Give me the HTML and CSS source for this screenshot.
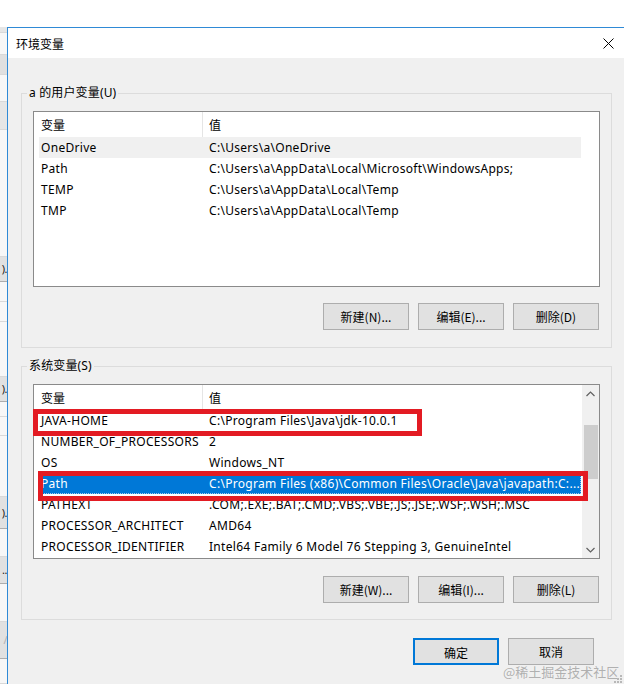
FILE: index.html
```html
<!DOCTYPE html>
<html lang="zh-CN">
<head>
<meta charset="utf-8">
<title>环境变量</title>
<link rel="stylesheet" href="styles.css">
</head>
<body>
<div class="screen">
  <div class="bgwin">
    <div class="seg s-gray h6"></div>
    <div class="seg s-light h22"></div>
    <div class="seg s-dark h20"></div>
    <div class="seg s-light h27"></div>
    <div class="seg s-gray h28"></div>
    <div class="seg s-light h127"></div>
    <div class="seg s-btn h25"><span>).</span></div>
    <div class="seg s-light h20"></div>
    <div class="seg s-light h20"></div>
    <div class="seg s-light h55"></div>
    <div class="seg s-btn h25"><span>).</span></div>
    <div class="seg s-light h15"></div>
    <div class="seg s-light h19"></div>
    <div class="seg s-light h61"></div>
    <div class="seg s-btn h32"><span>).</span></div>
    <div class="seg s-light h28"></div>
    <div class="seg s-btn h27"><span>..</span></div>
    <div class="seg s-light h38"></div>
    <div class="seg s-btn h37"><span class="faint">/</span></div>
    <div class="seg s-light h25"></div>
  </div>

  <div class="dialog">
    <div class="titlebar">
      <span class="title">环境变量</span>
      <svg class="close" width="11" height="11" viewBox="0 0 11 11" aria-hidden="true">
        <path d="M0.5 0.5 L10.5 10.5 M10.5 0.5 L0.5 10.5" stroke="#000" stroke-width="1" fill="none"/>
      </svg>
    </div>

    <div class="body">
      <fieldset class="group g1">
        <legend>a 的用户变量(U)</legend>
        <div class="list l1">
          <div class="cols">
            <div class="lhead"><div class="h1">变量</div><div class="h2">值</div></div>
            <div class="row inactive"><div class="c1">OneDrive</div><div class="c2">C:\Users\a\OneDrive</div></div>
            <div class="row"><div class="c1">Path</div><div class="c2">C:\Users\a\AppData\Local\Microsoft\WindowsApps;</div></div>
            <div class="row"><div class="c1">TEMP</div><div class="c2">C:\Users\a\AppData\Local\Temp</div></div>
            <div class="row"><div class="c1">TMP</div><div class="c2">C:\Users\a\AppData\Local\Temp</div></div>
          </div>
        </div>
        <div class="btns">
          <button class="btn">新建(N)...</button>
          <button class="btn">编辑(E)...</button>
          <button class="btn">删除(D)</button>
        </div>
      </fieldset>

      <fieldset class="group g2">
        <legend>系统变量(S)</legend>
        <div class="list l2">
          <div class="cols">
            <div class="lhead"><div class="h1">变量</div><div class="h2">值</div></div>
            <div class="row"><div class="c1">JAVA-HOME</div><div class="c2">C:\Program Files\Java\jdk-10.0.1</div></div>
            <div class="row"><div class="c1">NUMBER_OF_PROCESSORS</div><div class="c2">2</div></div>
            <div class="row"><div class="c1">OS</div><div class="c2">Windows_NT</div></div>
            <div class="row selected"><div class="c1">Path</div><div class="c2">C:\Program Files (x86)\Common Files\Oracle\Java\javapath:C:...</div></div>
            <div class="row"><div class="c1">PATHEXT</div><div class="c2">.COM;.EXE;.BAT;.CMD;.VBS;.VBE;.JS;.JSE;.WSF;.WSH;.MSC</div></div>
            <div class="row"><div class="c1">PROCESSOR_ARCHITECT</div><div class="c2">AMD64</div></div>
            <div class="row"><div class="c1">PROCESSOR_IDENTIFIER</div><div class="c2">Intel64 Family 6 Model 76 Stepping 3, GenuineIntel</div></div>
          </div>
          <div class="scrollbar">
            <div class="sbtn">
              <svg width="9" height="6" viewBox="0 0 9 6" aria-hidden="true"><path d="M0.5 5 L4.5 1 L8.5 5" stroke="#606060" stroke-width="1.2" fill="none"/></svg>
            </div>
            <div class="track-top"></div>
            <div class="thumb"></div>
            <div class="track-rest"></div>
            <div class="sbtn">
              <svg width="9" height="6" viewBox="0 0 9 6" aria-hidden="true"><path d="M0.5 1 L4.5 5 L8.5 1" stroke="#606060" stroke-width="1.2" fill="none"/></svg>
            </div>
          </div>
          <div class="mark mark1"></div>
          <div class="mark mark2"></div>
        </div>
        <div class="btns">
          <button class="btn">新建(W)...</button>
          <button class="btn">编辑(I)...</button>
          <button class="btn">删除(L)</button>
        </div>
      </fieldset>

      <div class="footer">
        <button class="btn primary">确定</button>
        <button class="btn">取消</button>
      </div>
    </div>
  </div>

  <div class="watermark">@稀土掘金技术社区</div>
  <svg class="grip" width="8" height="8" viewBox="0 0 8 8" aria-hidden="true">
    <rect x="6" y="0" width="2" height="2" fill="#b8b8b8"/>
    <rect x="3" y="3" width="2" height="2" fill="#b8b8b8"/>
    <rect x="6" y="3" width="2" height="2" fill="#b8b8b8"/>
    <rect x="0" y="6" width="2" height="2" fill="#b8b8b8"/>
    <rect x="3" y="6" width="2" height="2" fill="#b8b8b8"/>
    <rect x="6" y="6" width="2" height="2" fill="#b8b8b8"/>
  </svg>
</div>
</body>
</html>
```

FILE: styles.css
```css
* { box-sizing: border-box; }

html, body {
  margin: 0;
  padding: 0;
}

body {
  width: 624px;
  height: 684px;
  overflow: hidden;
  background: #ffffff;
  font-family: "Noto Sans", "Noto Sans CJK SC", sans-serif;
  font-size: 12px;
  color: #000;
}

.screen {
  position: relative;
  display: flex;
  height: 684px;
  padding-top: 27px;
}

/* background window sliver on the left */
.bgwin {
  width: 7px;
  flex: none;
  display: flex;
  flex-direction: column;
  overflow: hidden;
  background: #f0f0f0;
}

.seg {
  flex: none;
  border-bottom: 1px solid #d9d9d9;
  display: flex;
  align-items: center;
  justify-content: flex-end;
  white-space: nowrap;
}

.seg span {
  font-size: 11px;
  line-height: 14px;
  letter-spacing: -0.5px;
  color: #222;
}

.seg span.faint { color: #b0b0b0; }

.s-gray { background: #e6e6e6; }
.s-dark { background: #e0e0e0; }
.s-light { background: #f7f7f7; }
.s-btn { background: #e1e1e1; border-bottom-color: #adadad; }

.h6 { height: 6px; }
.h15 { height: 15px; }
.h19 { height: 19px; }
.h20 { height: 20px; }
.h22 { height: 22px; }
.h25 { height: 25px; }
.h27 { height: 27px; }
.h28 { height: 28px; }
.h32 { height: 32px; }
.h37 { height: 37px; }
.h38 { height: 38px; }
.h55 { height: 55px; }
.h61 { height: 61px; }
.h127 { height: 127px; }

/* dialog */
.dialog {
  flex: 1;
  display: flex;
  flex-direction: column;
  background: #f0f0f0;
  border-left: 1px solid #2f8ad6;
  border-top: 1px solid #2f8ad6;
}

.titlebar {
  height: 30px;
  flex: none;
  background: #ffffff;
  display: flex;
  align-items: center;
  justify-content: space-between;
  padding: 0 10px 0 8px;
}

.title {
  font-family: "Noto Sans CJK SC", sans-serif;
  font-size: 12px;
}

.close { display: block; }

.body {
  padding-top: 27px;
}

.group {
  margin: 0 12px 0 13px;
  padding: 0 0 17px 0;
  border: 1px solid #dcdcdc;
  min-width: 0;
}

.g2 {
  margin-top: 10px;
  padding-bottom: 16px;
}

.group legend {
  margin-left: 5px;
  padding: 0 2px;
  height: 16px;
  line-height: 16px;
  letter-spacing: 0.15px;
  font-family: "Noto Sans", "Noto Sans CJK SC", sans-serif;
}

/* list views */
.list {
  position: relative;
  display: flex;
  margin: 10px 11px 0 11px;
  border: 1px solid #8a8a8a;
  background: #ffffff;
}

.l1 { height: 176px; }
.l2 { height: 175px; }

.cols {
  width: 547px;
  flex: none;
  overflow: hidden;
}

.lhead {
  display: flex;
  height: 25px;
  line-height: 25px;
}

.h1 {
  width: 169px;
  padding-left: 7px;
  border-right: 1px solid #e5e5e5;
  font-family: "Noto Sans CJK SC", sans-serif;
}

.h2 {
  flex: 1;
  padding-left: 6px;
  font-family: "Noto Sans CJK SC", sans-serif;
}

.row {
  display: flex;
  height: 21px;
  line-height: 21px;
  margin-left: 5px;
  white-space: nowrap;
  letter-spacing: 0.3px;
}

.c1 {
  width: 164px;
  flex: none;
  padding-left: 2px;
  overflow: hidden;
}

.c2 {
  flex: 1;
  padding-left: 6px;
  overflow: hidden;
}

.row.inactive { background: #f0f0f0; }

.row.selected {
  background: #0078d7;
  color: #ffffff;
  outline: 1px dotted #9ec8ef;
  outline-offset: -1px;
}

/* scrollbar */
.scrollbar {
  margin-left: 1px;
  width: 17px;
  flex: none;
  display: flex;
  flex-direction: column;
  background: #f0f0f0;
}

.sbtn {
  height: 17px;
  flex: none;
  display: flex;
  align-items: center;
  justify-content: center;
}

.sbtn svg { display: block; }

.track-top { height: 23px; flex: none; }

.thumb {
  height: 54px;
  flex: none;
  margin: 0 1px 0 2px;
  background: #cdcdcd;
}

.track-rest { flex: 1; }

/* red annotation boxes */
.mark {
  position: absolute;
  border: 5px solid #e31b23;
}

.mark1 {
  left: -1px;
  top: 24px;
  width: 389px;
  height: 27px;
}

.mark2 {
  left: 4px;
  top: 86px;
  width: 550px;
  height: 30px;
}

/* buttons */
.btns {
  display: flex;
  justify-content: flex-end;
  gap: 9px;
  margin: 17px 12px 0 0;
}

.g2 .btns { margin-top: 17px; }
.g1 .btns { margin-top: 16px; }

.btn {
  width: 86px;
  height: 27px;
  padding: 0;
  border: 1px solid #adadad;
  background: #e1e1e1;
  color: #000;
  font-family: "Noto Sans CJK SC", sans-serif;
  font-size: 12px;
  line-height: 25px;
  text-align: center;
}

.btn.primary {
  border: 2px solid #0078d7;
}

.footer {
  display: flex;
  justify-content: flex-end;
  gap: 9px;
  margin: 18px 30px 0 0;
}

/* overlays */
.watermark {
  position: absolute;
  left: 503px;
  top: 663px;
  font-family: "Noto Sans CJK SC", sans-serif;
  font-size: 13px;
  line-height: 18px;
  color: rgba(120, 120, 120, 0.55);
  white-space: nowrap;
}

.grip {
  position: absolute;
  right: 2px;
  bottom: 1px;
}
```
